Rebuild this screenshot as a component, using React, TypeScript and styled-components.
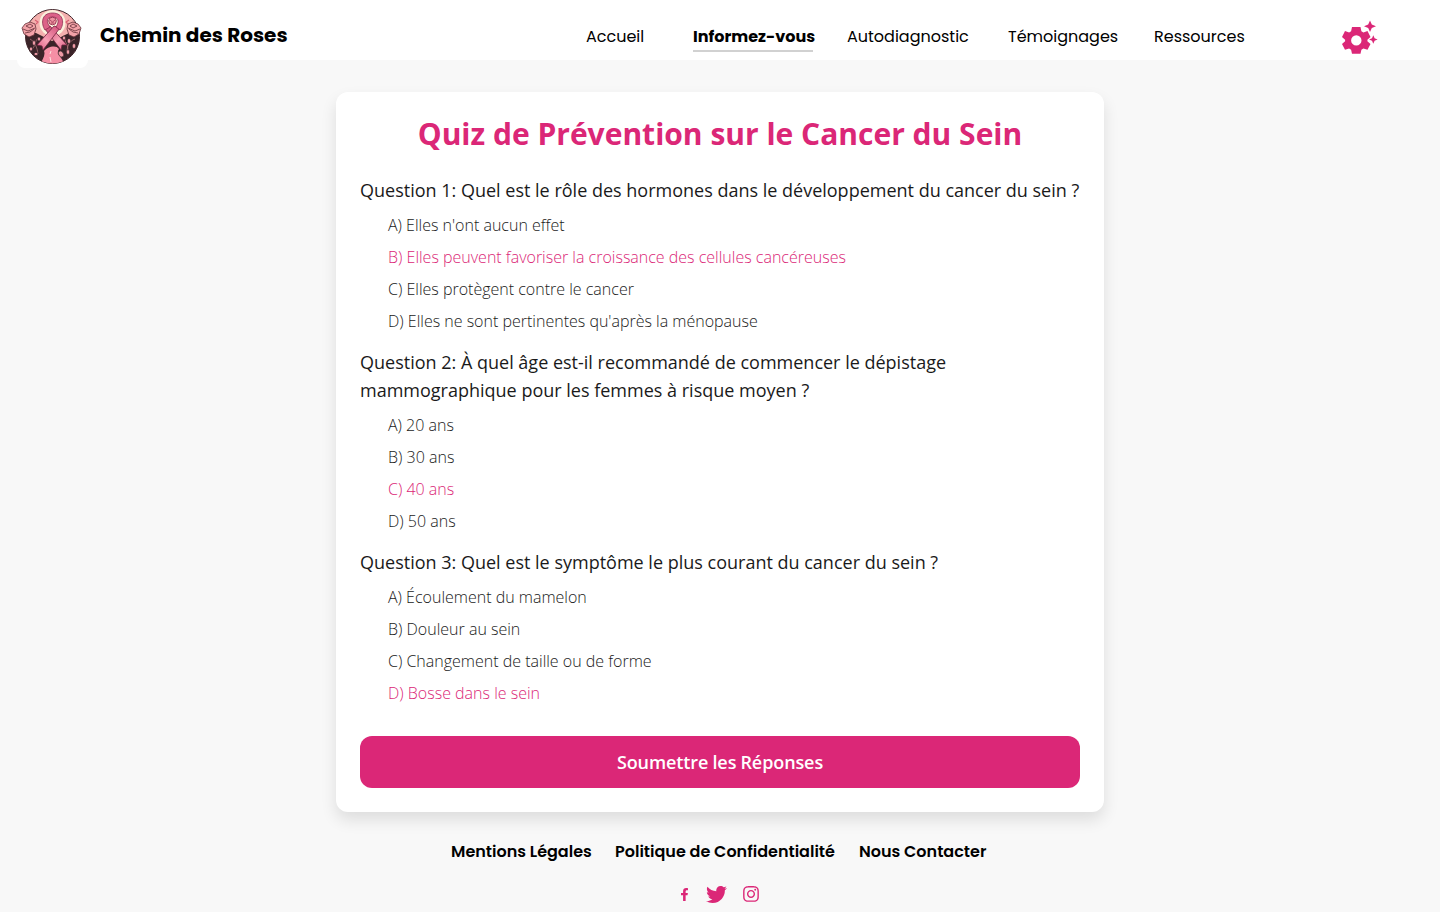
import React from 'react';
import styled, { createGlobalStyle } from 'styled-components';
import { FaFacebookF, FaTwitter, FaInstagram } from 'react-icons/fa';

const pink = '#db2777';
const display = "Poppins, Inter, sans-serif";

const Global = createGlobalStyle`
  *, *::before, *::after { box-sizing: border-box; }
  body { margin: 0; background: #f8f8f8; font-family: 'Open Sans', sans-serif; color: #000; }
  h1, h2, p, ul { margin: 0; padding: 0; }
  ul { list-style: none; }
  a { color: inherit; text-decoration: none; }
`;

const Page = styled.div`
  height: 912px;
  overflow: hidden;
  display: flex;
  flex-direction: column;
  align-items: center;
`;
const Header = styled.header`
  width: 100%;
  height: 60px;
  background: #fff;
  display: flex;
  align-items: flex-start;
`;
const LogoTile = styled.div`
  width: 71px;
  height: 68px;
  margin-left: 17px;
  background: #fff;
  border-radius: 8px;
  flex: none;
  svg { display: block; margin: 8px 0 0 4px; }
`;
const Brand = styled.div`
  width: 498px;
  flex: none;
  padding: 20px 0 0 12px;
  font: 700 20px/30px ${display};
  white-space: nowrap;
`;
const Nav = styled.nav`
  display: flex;
  padding-top: 25px;
`;
const NavLink = styled.a<{ $w: number; $active?: boolean }>`
  width: ${p => p.$w}px;
  font: ${p => (p.$active ? 700 : 400)} 16px/24px ${display};
  white-space: nowrap;
  &::after {
    content: '';
    display: ${p => (p.$active ? 'block' : 'none')};
    width: 120px;
    height: 2px;
    margin-top: 1px;
    background: #d1d1d1;
  }
`;
const Settings = styled.div`
  margin: 20px 0 0 35px;
  svg { display: block; }
`;
const Card = styled.main`
  width: 768px;
  height: 720px;
  margin-top: 32px;
  padding: 24px;
  background: #fff;
  border-radius: 12px;
  box-shadow: 0 8px 16px rgba(0, 0, 0, 0.11);
  flex: none;
`;
const Title = styled.h1`
  font-weight: 700;
  font-size: 30px;
  line-height: 36px;
  text-align: center;
  color: ${pink};
  margin-bottom: 24px;
`;
const Block = styled.section`
  margin-bottom: 15px;
`;
const Question = styled.p`
  font-size: 18px;
  line-height: 28px;
  margin-bottom: 9px;
  color: #1a1a1a;
`;
const Options = styled.ul`
  display: flex;
  flex-direction: column;
  gap: 8px;
  padding-left: 28px;
`;
const Option = styled.li<{ $right?: boolean }>`
  font-weight: 300;
  font-size: 16px;
  line-height: 24px;
  color: ${p => (p.$right ? pink : '#1a1a1a')};
`;
const Submit = styled.button`
  display: block;
  width: 100%;
  height: 52px;
  margin-top: 31px;
  border: 0;
  border-radius: 12px;
  background: ${pink};
  color: #fff;
  font: 600 18px/28px 'Open Sans', sans-serif;
  letter-spacing: -0.1px;
  word-spacing: -0.4px;
`;
const Footer = styled.footer`
  display: flex;
  flex-direction: column;
  align-items: center;
  padding-top: 28px;
`;
const Links = styled.div`
  display: flex;
  margin-left: -3px;
  gap: 24px;
  font: 600 16px/24px ${display};
  white-space: nowrap;
`;
const FooterLink = styled.a<{ $w: number }>`
  width: ${p => p.$w}px;
`;
const Social = styled.div`
  display: flex;
  align-items: center;
  margin: 19px 3px 0 0;
  height: 22px;
  gap: 15px;
  color: ${pink};
`;

function Logo() {
  return (
    <svg width="62" height="57" viewBox="0 0 62 57">
      <defs>
        <clipPath id="disc"><circle cx="31.5" cy="28.5" r="27" /></clipPath>
        <linearGradient id="legRight" x1="0" x2="1" y2="1">
          <stop stopColor="#c23c68" /><stop offset=".6" stopColor="#f7a0b4" /><stop offset="1" stopColor="#dc5880" />
        </linearGradient>
        <linearGradient id="legLeft" x1="1" x2="0" y2="1">
          <stop stopColor="#d14c78" /><stop offset=".6" stopColor="#f7a0b4" /><stop offset="1" stopColor="#dc5880" />
        </linearGradient>
      </defs>
      <circle cx="31.5" cy="28.5" r="27" fill="#f4b0ae" stroke="#40252b" strokeWidth="1" />
      <g clipPath="url(#disc)">
        <circle cx="31.5" cy="15" r="13" fill="#fbf0dc" />
        <path d="M0 25 15 25 23 29 31 33 40 29 48 25 62 24V57H0Z" fill="#3b2429" />
        <path d="M20 57c0-5 5-9 3-14 3-4 12-7 15-2-4 5 4 8 5 16Z" fill="#f58fa5" />
        <path d="m30 43-1 3m0 3 1 5" stroke="#fde0df" />
        <path d="M9 31c5 3 7 8 8 15M18 29c-5 4-3 10-8 13M44 29c-1 6 5 8 2 16M54 31c-6 2-8 7-8 14" fill="none" stroke="#b07277" strokeWidth=".8" />
        <g fill="#ef9aa5" stroke="#20171b" strokeWidth=".6">
          <ellipse cx="13" cy="35" rx="1.7" ry="2.4" /><ellipse cx="18" cy="31" rx="1.7" ry="2" />
          <ellipse cx="10" cy="41" rx="1.6" ry="2" /><ellipse cx="15" cy="46" rx="2" ry="1.6" />
          <ellipse cx="40" cy="46" rx="2.4" ry="3.4" transform="rotate(-35 40 46)" />
          <ellipse cx="47" cy="44" rx="1.7" ry="2.4" /><ellipse cx="48" cy="33" rx="1.8" ry="2.5" />
          <ellipse cx="53" cy="38" rx="1.8" ry="2.5" /><ellipse cx="43" cy="30" rx="1.6" ry="2" />
        </g>
      </g>
      <path d="m14 12 3 2-2 2m33-4-3 2 2 2" fill="none" stroke="#d85c72" strokeWidth="1.1" />
      <g fill="#f3a2a8" stroke="#653139" strokeWidth=".8">
        <path d="m1 20 3-4 5-2 5 2 1 5-2 6-5 2-5-3Z" /><path d="m60 20-3-4-5-2-5 2-1 5 2 6 5 2 5-3Z" />
        <path d="m2 21 5 2 7-3M4 25l5-1 4-3M5 18l4-2 3 2-3 2Z" fill="none" />
        <path d="m59 21-5 2-7-3m10 5-5-1-4-3m8-3-4-2-3 2 3 2Z" fill="none" />
      </g>
      <path d="M24 21 29 18 46 37 41 37 40 42Z" fill="url(#legRight)" stroke="#71233f" strokeWidth=".8" />
      <path d="M39 20 33 18 16 37 21 38 22 42Z" fill="url(#legLeft)" stroke="#71233f" strokeWidth=".8" />
      <path d="M24 22c-4-6-4-17 7.500-17s12 11 7.500 17l-4-3c4-6 2-10-3.500-10s-7 4-2.500 10Z" fill="#dc6288" stroke="#8f2c51" strokeWidth=".8" />
      <circle cx="31.5" cy="13" r="3.8" fill="#ee95a2" stroke="#922d4c" strokeWidth=".9" />
      <path d="m29 12 2.500 2 2.500-2m-4 3h3" fill="none" stroke="#922d4c" strokeWidth=".7" />
    </svg>
  );
}

function SettingsIcon() {
  return (
    <svg width="38" height="36" viewBox="0 0 38 36" fill={pink}>
      <path fillRule="evenodd" d="M10 7h8.500l.9 4.200 2 1.200 4.100-1.300 3 6-3.100 2.600v1.600l3.100 2.600-3 5.900-4.100-1.300-2 1.200-.9 4.100H10l-.9-4.100-2-1.200L3 29.800l-3-5.900 3.100-2.600v-1.600L0 17.100l3-6 4.100 1.300 2-1.200ZM14.300 15.200a5.200 5.200 0 1 0 0 10.400 5.200 5.200 0 0 0 0-10.400Z" />
      <path d="m28 .5 1.800 4L34 6.200l-4.200 1.700L28 12l-1.800-4.100L22 6.200l4.200-1.700ZM31.300 15.300l1.300 2.900 3 1.300-3 1.300-1.300 3-1.300-3-3-1.300 3-1.300Z" />
    </svg>
  );
}

const questions = [
  { text: 'Question 1: Quel est le rôle des hormones dans le développement du cancer du sein ?', right: 1,
    options: ["A) Elles n'ont aucun effet", 'B) Elles peuvent favoriser la croissance des cellules cancéreuses', 'C) Elles protègent contre le cancer', "D) Elles ne sont pertinentes qu'après la ménopause"] },
  { text: 'Question 2: À quel âge est-il recommandé de commencer le dépistage mammographique pour les femmes à risque moyen ?', right: 2,
    options: ['A) 20 ans', 'B) 30 ans', 'C) 40 ans', 'D) 50 ans'] },
  { text: 'Question 3: Quel est le symptôme le plus courant du cancer du sein ?', right: 3,
    options: ['A) Écoulement du mamelon', 'B) Douleur au sein', 'C) Changement de taille ou de forme', 'D) Bosse dans le sein'] },
];

export default function App() {
  return (
    <Page>
      <Global />
      <Header>
        <LogoTile><Logo /></LogoTile>
        <Brand>Chemin des Roses</Brand>
        <Nav>
          <NavLink $w={107}>Accueil</NavLink>
          <NavLink $w={154} $active>Informez-vous</NavLink>
          <NavLink $w={161}>Autodiagnostic</NavLink>
          <NavLink $w={146}>Témoignages</NavLink>
          <NavLink $w={153}>Ressources</NavLink>
        </Nav>
        <Settings><SettingsIcon /></Settings>
      </Header>
      <Card>
        <Title>Quiz de Prévention sur le Cancer du Sein</Title>
        {questions.map(q => (
          <Block key={q.text}>
            <Question>{q.text}</Question>
            <Options>{q.options.map((o, i) => <Option key={o} $right={i === q.right}>{o}</Option>)}</Options>
          </Block>
        ))}
        <Submit>Soumettre les Réponses</Submit>
      </Card>
      <Footer>
        <Links>
          <FooterLink $w={140}>Mentions Légales</FooterLink>
          <FooterLink $w={220}>Politique de Confidentialité</FooterLink>
          <FooterLink $w={127}>Nous Contacter</FooterLink>
        </Links>
        <Social>
          <FaFacebookF size={13} />
          <FaTwitter size={21} />
          <FaInstagram size={18} />
        </Social>
      </Footer>
    </Page>
  );
}
